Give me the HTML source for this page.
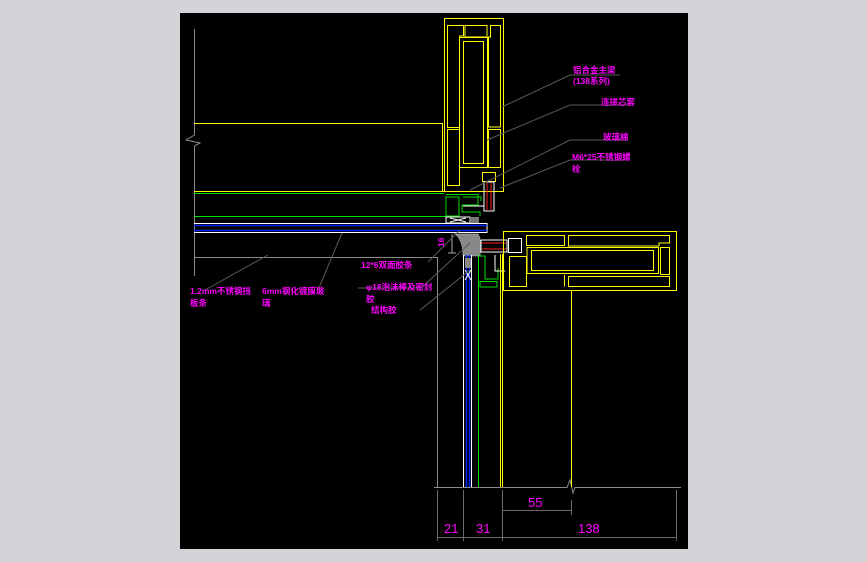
<!DOCTYPE html>
<html><head><meta charset="utf-8"><style>
html,body{margin:0;padding:0;background:#d4d4d8;width:867px;height:562px;overflow:hidden}
svg{display:block}
text{font-family:"Liberation Sans","Noto Sans CJK SC",sans-serif;fill:#ff00ff;font-size:8.5px;font-weight:bold}
</style></head><body>
<svg width="867" height="562" viewBox="0 0 867 562" xmlns="http://www.w3.org/2000/svg">
<rect x="0" y="0" width="867" height="562" fill="#d4d4d8"/>
<rect x="180" y="13" width="508" height="536" fill="#000"/>
<g fill="none" stroke-width="1">
<path d="M194.5 29V135L186 140L200 143L194.5 146V276" stroke="#8a8a8a"/>
<path d="M194 257.5H437.5V487" stroke="#8a8a8a"/>
<path d="M434 487.5H567L570 480L573 493L575 487.5H681" stroke="#8a8a8a"/>
<path d="M194 123.5H442.5V191" stroke="#ffff00"/>
<path d="M194 191.5H444" stroke="#ffff00"/>
<path d="M194 193.5H444" stroke="#00dd00"/>
<path d="M194 216.5H446" stroke="#00dd00"/>
<path d="M194 223.5H487V232.5H194" stroke="#fff"/>
<path d="M194 225.5H487M194 230.5H487" stroke="#0020ff" stroke-width="1.5"/>
<path d="M444.5 18.5H503.5V191.5H444.5Z" stroke="#ffff00"/>
<path d="M447.5 25.5H463.5V36H459.5V127.5H447.5ZM465 25.5H487V37H465ZM490.5 25.5H500.5V127H488.5V37H490.5Z" stroke="#ffff00"/>
<path d="M459.5 37.5H487.5V167.5H459.5Z" stroke="#ffff00"/>
<path d="M463.5 41.5H483.5V163.5H463.5Z" stroke="#ffff00"/>
<path d="M447.5 129.5H459.5V185.5H447.5ZM488.5 129.5H500.5V167.5H488.5Z" stroke="#ffff00"/>
<path d="M482.5 172.5H495.5V181.5H482.5Z" stroke="#ffff00"/>
<path d="M484 182H494V211H484Z" stroke="#fff"/>
<path d="M487 183V210M491 183V210" stroke="#ff2020"/>
<path d="M446 194.5H478V205H462V212H480V216M446 197V216H459V197Z" stroke="#00dd00"/>
<path d="M463 197H481V201" stroke="#00dd00"/>
<path d="M463 206H484V201" stroke="#fff"/>
<rect x="446" y="217" width="24" height="6" stroke="#fff"/>
<path d="M450 218L466 222M450 222L466 218" stroke="#fff"/>
<rect x="471" y="217" width="8" height="6" fill="#777" stroke="none"/>
<path d="M455 234Q463 240 463 256H480Q482 240 478 234Z" fill="#888" stroke="#ccc" stroke-dasharray="1 1"/>
<path d="M463.5 255V487M471.5 255V487" stroke="#fff"/>
<path d="M466.5 255V487M469.5 255V487" stroke="#0020ff" stroke-width="1.5"/>
<path d="M465 258H471V268H465Z" fill="#888" stroke="none"/>
<path d="M465 270L471 280M471 270L465 280" stroke="#fff"/>
<path d="M478.5 256V487" stroke="#00dd00"/>
<path d="M478 256H485V279H498V268" stroke="#00dd00"/>
<path d="M480 281.5H497V287H480Z" stroke="#00dd00"/>
<path d="M495 255V271H505" stroke="#fff"/>
<path d="M481 240H507V252H481Z" stroke="#fff"/>
<path d="M482 243H506M482 249H506" stroke="#ff2020"/>
<path d="M508.5 238.5H521.5V252.5H508.5Z" stroke="#fff"/>
<path d="M500.5 254V487M502.5 254V487" stroke="#ffff00"/>
<path d="M571.5 290V487" stroke="#ffff00"/>
<path d="M503.5 231.5H676.5V290.5H503.5Z" stroke="#ffff00"/>
<path d="M506 290.5H571.5" stroke="#ffff00"/>
<path d="M526.5 235.5H564.5V245.5H526.5ZM568.5 235.5H669.5V243H659V246H568.5ZM527 247.5H658.5V273.5H527Z" stroke="#ffff00"/>
<path d="M531.5 250.5H653.5V270.5H531.5Z" stroke="#ffff00"/>
<path d="M509.5 256.5H526.5V286.5H509.5ZM568.5 276.5H669.5V286.5H568.5ZM660.5 247.5H669.5V274.5H660.5Z" stroke="#ffff00"/>
<path d="M564.5 275V286.5" stroke="#ffff00"/>
<path d="M437.5 490V541M463.5 490V541M502.5 490V541M571.5 500V515M676.5 490V541" stroke="#6a6a6a"/>
<path d="M437 537.5H677M502 510.5H571" stroke="#6a6a6a"/>
<path d="M452 234V253M448 253H456" stroke="#aaa"/>
<g stroke="#5a5a5a">
<path d="M502 107L570 75H620"/>
<path d="M487 140L570 105H630"/>
<path d="M470 190L570 140H628"/>
<path d="M500 188L570 160H625"/>
<path d="M205 290L268 255"/>
<path d="M318 290L342 233"/>
<path d="M428 262L460 230"/>
<path d="M358 288H421L470 243"/>
<path d="M420 310L470 270"/>
</g>
</g>
<text x="573" y="73">铝合金主梁</text>
<text x="573" y="84">(138系列)</text>
<text x="601" y="105">连接芯套</text>
<text x="603" y="140">玻璃棉</text>
<text x="572" y="160">M6*25不锈钢螺</text>
<text x="572" y="172">栓</text>
<text x="190" y="294">1.2mm不锈钢挡</text>
<text x="190" y="306">板条</text>
<text x="262" y="294">6mm钢化镀膜玻</text>
<text x="262" y="306">璃</text>
<text x="361" y="268">12*6双面胶条</text>
<text x="366" y="290">φ18泡沫棒及密封</text>
<text x="366" y="302">胶</text>
<text x="371" y="313">结构胶</text>
<text x="438" y="245" font-size="8" transform="rotate(-90 442 243)">16</text>
<text x="528" y="507" style="font-size:13px;font-weight:normal">55</text>
<text x="444" y="533" style="font-size:13px;font-weight:normal">21</text>
<text x="476" y="533" style="font-size:13px;font-weight:normal">31</text>
<text x="578" y="533" style="font-size:13px;font-weight:normal">138</text>
</svg>
</body></html>
